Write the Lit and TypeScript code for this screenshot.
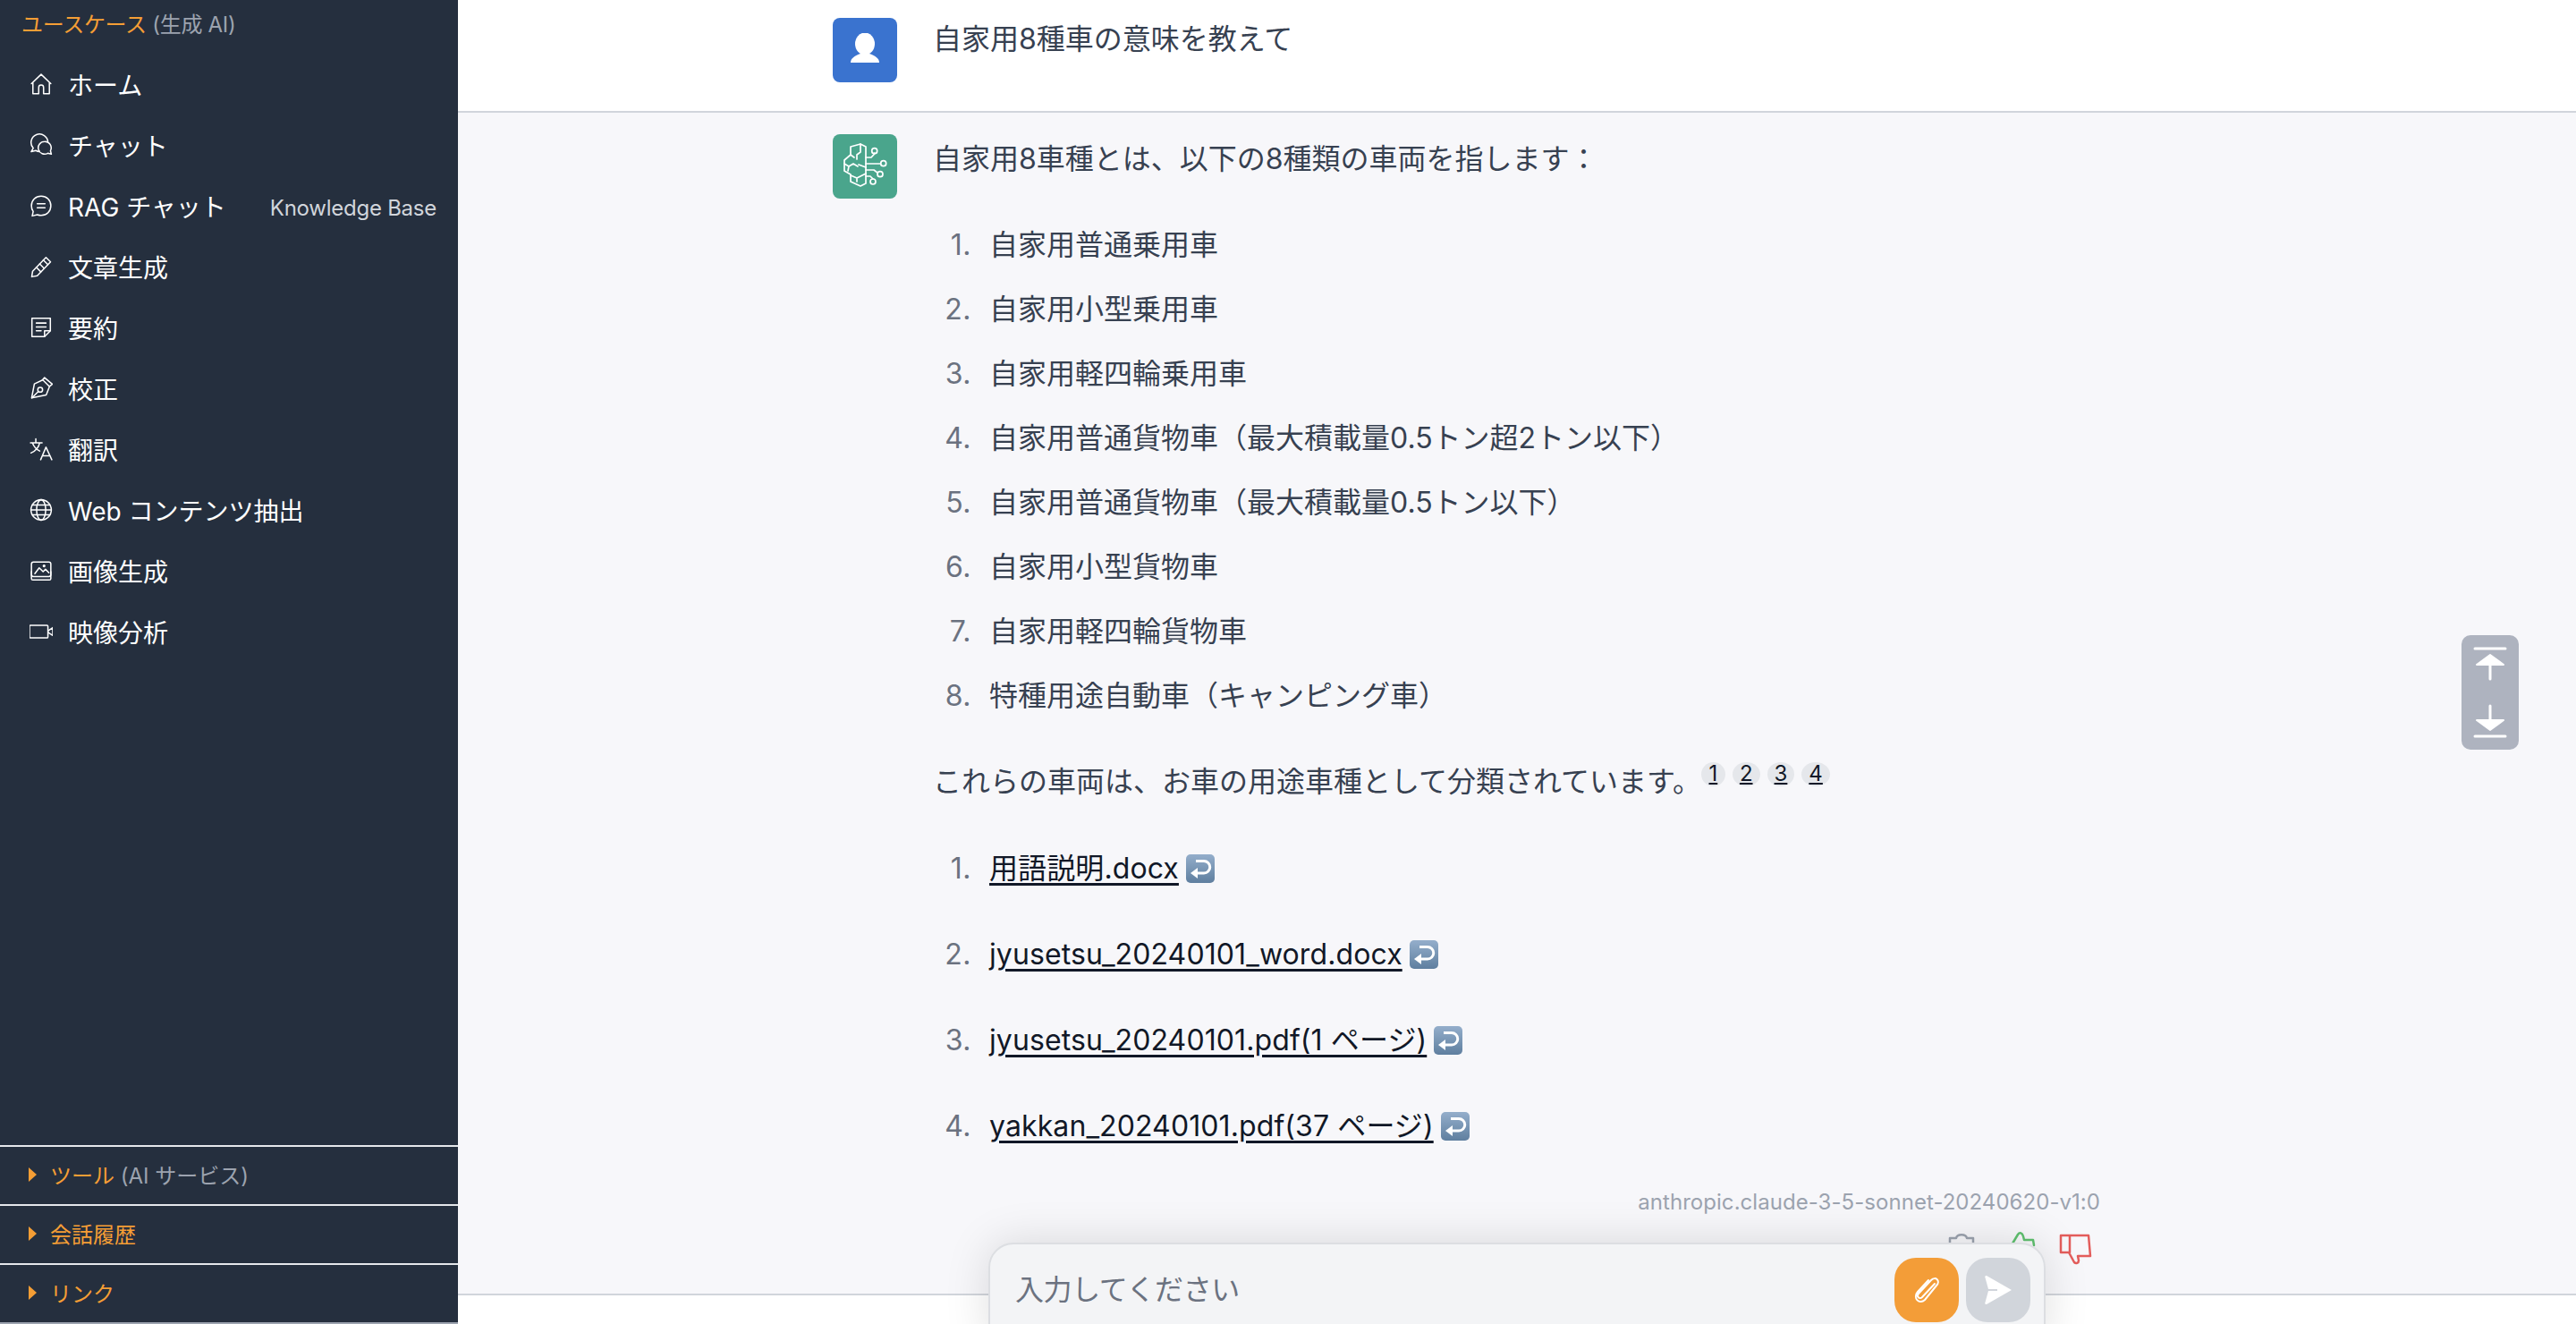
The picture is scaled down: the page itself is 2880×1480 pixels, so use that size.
import { LitElement, html, css, svg } from "lit";
import { customElement } from "lit/decorators.js";

const ic = (body: unknown) => html`<svg class="ic" viewBox="0 0 24 24" fill="none" stroke="currentColor" stroke-width="1.4" stroke-linecap="round" stroke-linejoin="round">${body}</svg>`;

const menu: [string, unknown, string?][] = [
  ["ホーム", svg`<path d="M2 11.500 12 2l10 9.500M3.500 10.500V22h6v-6.500a2.500 2.500 0 0 1 5 0V22h6V10.500"/>`],
  ["チャット", svg`<path d="M19 9.500A8.700 8.700 0 1 0 3.800 15.300L1.800 19l4.700-1.200c1.300.7 2.500 1 3.700 1"/><path d="M15.500 8.500a6.500 6.500 0 1 0 3.300 12.100l3.700.9-.9-3.500A6.500 6.500 0 0 0 15.500 8.500Z"/>`],
  ["RAG チャット", svg`<path d="M12 2c5.700 0 10 4.300 10 10s-4.300 10-10 10c-1.400 0-2.700-.3-3.900-.8L2.800 22.500l1-4.600A9.800 9.800 0 0 1 2 12C2 6.300 6.300 2 12 2Z"/><path d="M8 10h8M8 14h8"/>`, "Knowledge Base"],
  ["文章生成", svg`<path d="m17 2.500 4.700 4.600L8 21.500l-5.700 1 .9-5.700L17 2.500Z"/><path d="m14.300 5.300 4.700 4.700M10.500 9.200l4.600 4.600M7 12.700l4.700 4.700"/>`],
  ["要約", svg`<path d="M2.500 2.500h19v13l-6 6h-13v-19Z"/><path d="M7 7.500h10M7 11.500h10M7 15.500h5M15.500 21.500v-6h6"/>`],
  ["校正", svg`<path d="m15.500 1 8 6.700-3 2.500-7-7 2-2.200Z"/><path d="M13.500 3.500 5 7.500 2.200 22l15-3 3.300-8.300"/><circle cx="11" cy="13.500" r="2.500"/><path d="m2.500 22 6.700-6.700"/>`],
  ["翻訳", svg`<path d="M1 5.500h12M6.500 1.500v4M10.500 5.500c-1 5-4 8.500-9 10.500M3 5.500c1.500 4 4 6.800 7.500 8.500M11.500 23l5.500-13 6 13M13.300 19h8"/>`],
  ["Web コンテンツ抽出", svg`<circle cx="12" cy="12" r="10.500"/><path d="M1.500 12h21M3 7h18M3 17h18"/><ellipse cx="12" cy="12" rx="4.700" ry="10.500"/>`],
  ["画像生成", svg`<rect x="2" y="3" width="20" height="15" rx="2"/><path d="M2 13v7a1.500 1.500 0 0 0 1.500 1.500h17A1.500 1.500 0 0 0 22 20v-7M5.500 15l4.500-6 4 4 2.500-2.500L20 14"/><circle cx="15" cy="7" r=".8" fill="currentColor"/>`],
  ["映像分析", svg`<rect x="0" y="5.500" width="19" height="13" rx="1"/><path d="m19.500 11 4.500-3v8l-4.500-3"/>`],
];

const steps = ["自家用普通乗用車", "自家用小型乗用車", "自家用軽四輪乗用車", "自家用普通貨物車（最大積載量0.5トン超2トン以下）", "自家用普通貨物車（最大積載量0.5トン以下）", "自家用小型貨物車", "自家用軽四輪貨物車", "特種用途自動車（キャンピング車）"];
const links = ["用語説明.docx", "jyusetsu_20240101_word.docx", "jyusetsu_20240101.pdf(1 ページ)", "yakkan_20240101.pdf(37 ページ)"];

const returnEmoji = html`<svg class="emoji" viewBox="0 0 32 32"><defs><linearGradient id="eg" x1="0" y1="0" x2="0" y2="1"><stop offset="0" stop-color="#94aecb"/><stop offset="1" stop-color="#5f7f9f"/></linearGradient></defs><rect x="0" y="0" width="32" height="32" rx="5" fill="url(#eg)"/><path d="M11 7.500h9a6.500 6.500 0 0 1 0 13.500h-7" fill="none" stroke="#fff" stroke-width="3"/><path d="m13 15-8 6 8 6Z" fill="#fff"/></svg>`;

const brain = html`<svg class="brain" viewBox="0 0 72 72" fill="none" stroke="#fff" stroke-width="1.700" stroke-linecap="round" stroke-linejoin="round">
  <path d="M31 11 20 14v9l-7 6v12l7 4v8l11 5 6-3V14l-6-3Z"/>
  <path d="M31 11v9l-4 3v5M20 23l4 3M13 33l5 3 5-3 5 3M18 36l-1 5M37 37l-8-3M37 44l-10 5v4M27 49l-7-3"/>
  <path d="M37 33h16.500M37 26h6l3.700-4v-1M37 40h9l4 3M37 47h5l3 3"/>
  <circle cx="46.700" cy="18.700" r="3"/><circle cx="56.700" cy="32.700" r="3"/><circle cx="53" cy="44.700" r="3"/><circle cx="45" cy="53" r="3"/>
</svg>`;

@customElement("app-root")
export class AppRoot extends LitElement {
  static styles = css`
    :host { display: block; width: 2880px; height: 1480px; overflow: hidden; position: relative; font-family: Inter, "Noto Sans CJK JP", "Noto Sans", sans-serif; color: #374151; }
    .app { display: flex; height: 1480px; }
    .side { width: 512px; flex: none; background: #252f3e; color: #fff; display: flex; flex-direction: column; border-bottom: 2px solid #9ca3af; box-sizing: border-box; }
    .title { font-size: 24px; line-height: 32px; padding: 12px 0 0 24px; color: #f59e35; height: 60px; box-sizing: border-box; letter-spacing: -.3px; }
    .muted { color: #9ca3af; }
    .menu { display: flex; flex-direction: column; }
    .item { display: flex; align-items: center; height: 68px; padding: 0 24px 0 33px; font-size: 28px; }
    .ic { width: 26px; height: 26px; margin-right: 17px; flex: none; }
    .kb { margin-left: auto; font-size: 24px; color: #d1d5db; letter-spacing: -.25px; padding-top: 4px; }
    .fold { margin-top: auto; }
    .sec { height: 66px; border-top: 2px solid #e5e7eb; box-sizing: border-box; display: flex; align-items: center; padding: 0 0 3px 32px; font-size: 24px; color: #f59e35; }
    .sec i { width: 0; height: 0; border-left: 9px solid #f59e35; border-top: 8px solid transparent; border-bottom: 8px solid transparent; margin-right: 15px; }
    .main { flex: 1; min-width: 0; display: flex; flex-direction: column; }
    .turn { display: flex; padding-left: 419px; }
    .inner { width: 1417px; display: flex; gap: 40px; }
    .user { height: 126px; background: #fff; border-bottom: 2px solid #d1d5db; box-sizing: border-box; padding-top: 20px; }
    .bot { height: 1322px; background: #f7f7fa; border-bottom: 2px solid #d1d5db; box-sizing: border-box; padding-top: 24px; }
    .foot { flex: 1; background: #fff; }
    .av { width: 72px; height: 72px; border-radius: 8px; flex: none; display: flex; align-items: center; justify-content: center; }
    .av.u { background: #3a73cf; }
    .av.b { background: #4aa58c; }
    .brain { width: 72px; height: 72px; }
    .body { font-size: 32px; line-height: 56px; flex: 1; min-width: 0; color: #374151; position: relative; }
    .user .body { margin-top: -4px; }
    p { margin: 0; }
    .lede { margin-bottom: 40px; }
    ol { margin: 0; padding: 0 0 0 63px; list-style: none; }
    li { position: relative; margin-bottom: 16px; }
    li b { position: absolute; left: -60px; width: 40px; text-align: right; font-weight: 400; color: #6b7280; letter-spacing: .5px; }
    .after { margin: 40px 0 41px; display: flex; align-items: flex-start; }
    .refs { display: inline-flex; gap: 8px; margin-left: 0; margin-top: 6px; }
    .ref { min-width: 27px; height: 27px; padding: 0 8px; box-sizing: border-box; border-radius: 50%; background: #e5e7eb; color: #111827; font-size: 24px; line-height: 26px; text-align: center; text-decoration: underline; text-decoration-thickness: 2px; text-underline-offset: 2px; }
    .links li { margin-bottom: 40px; }
    .links a { color: #111827; text-decoration: underline; text-decoration-thickness: 3px; text-underline-offset: 5px; letter-spacing: .1px; }
    .emoji { width: 32px; height: 32px; margin-left: 8px; vertical-align: -5px; }
    .model { position: absolute; top: 1178px; right: 0; left: 0; font-size: 24px; line-height: 32px; color: #9ca3af; text-align: right; letter-spacing: .05px; }
    .jump { position: absolute; left: 2752px; top: 710px; width: 64px; height: 128px; border-radius: 10px; background: #aeb3bf; display: flex; flex-direction: column; justify-content: space-between; align-items: center; padding: 13px 0; box-sizing: border-box; }
    .jump svg { width: 40px; height: 40px; }
    .shade { position: absolute; left: 1105px; top: 1389px; width: 1182px; height: 120px; border-radius: 28px; background: #f3f4f6; border: 2px solid #dcdee2; box-sizing: border-box; box-shadow: 0 0 50px rgba(0,0,0,.13); display: flex; padding: 15px 15px 0 28px; gap: 8px; }
    .ph { flex: 1; font-size: 32px; line-height: 52px; padding-top: 10px; color: #6b7280; letter-spacing: -.4px; }
    .btn { width: 72px; height: 72px; border-radius: 24px; display: flex; align-items: center; justify-content: center; flex: none; }
    .btn.a { background: #f39d38; }
    .btn.s { background: #d1d5db; }
    .acts { position: absolute; left: 2170px; top: 1376px; }
  `;

  render() {
    return html`<div class="app">
      <aside class="side">
        <div class="title">ユースケース <span class="muted">(生成 AI)</span></div>
        <nav class="menu">
          ${menu.map(([t, i, k]) => html`<div class="item">${ic(i)}<span>${t}</span>${k ? html`<span class="kb">${k}</span>` : ""}</div>`)}
        </nav>
        <div class="fold">
          <div class="sec"><i></i><span>ツール <span class="muted">(AI サービス)</span></span></div>
          <div class="sec"><i></i><span>会話履歴</span></div>
          <div class="sec"><i></i><span>リンク</span></div>
        </div>
      </aside>
      <main class="main">
        <section class="turn user"><div class="inner">
          <div class="av u"><svg width="36" height="38" viewBox="0 0 36 38" fill="#fff"><ellipse cx="18" cy="12" rx="11" ry="12.500"/><path d="M2 33c0-5 5-8 11-10h10c6 2 11 5 11 10Z"/></svg></div>
          <div class="body">自家用8種車の意味を教えて</div>
        </div></section>
        <section class="turn bot"><div class="inner">
          <div class="av b">${brain}</div>
          <div class="body">
            <p class="lede">自家用8車種とは、以下の8種類の車両を指します：</p>
            <ol>${steps.map((s, i) => html`<li><b>${i + 1}.</b>${s}</li>`)}</ol>
            <div class="after"><span>これらの車両は、お車の用途車種として分類されています。</span><span class="refs">${[1, 2, 3, 4].map((n) => html`<span class="ref">${n}</span>`)}</span></div>
            <ol class="links">${links.map((s, i) => html`<li><b>${i + 1}.</b><a>${s}${returnEmoji}</a></li>`)}</ol>
            <div class="model">anthropic.claude-3-5-sonnet-20240620-v1:0</div>
          </div>
        </div></section>
        <div class="foot"></div>
      </main>
    </div>
    <svg class="acts" width="180" height="44" viewBox="0 0 180 44" fill="none" stroke-width="2.500" stroke-linejoin="round" stroke-linecap="round">
      <path stroke="#9ca3af" d="M10 8h7c1-5 11-5 12 0h7v30H10V8Z"/>
      <path stroke="#5fc06f" d="M80 14l6-10c2-3 5-2 6 2l1 4h10l1 6"/>
      <path stroke="#e35d5b" d="M144 5h21l2 23h-14l1 5c0 3-3 4-5 2l-6-11h-9V5h10v19"/>
    </svg>
    <div class="jump">
      <svg viewBox="0 0 40 40" fill="#fff" stroke="#fff" stroke-width="3" stroke-linecap="round" stroke-linejoin="round"><path d="M3 2h34" fill="none"/><path d="M20 9 5 20h30Z" stroke-width="2"/><path d="M20 20v16" fill="none"/></svg>
      <svg viewBox="0 0 40 40" fill="#fff" stroke="#fff" stroke-width="3" stroke-linecap="round" stroke-linejoin="round"><path d="M20 4v16" fill="none"/><path d="M5 20h30L20 31Z" stroke-width="2"/><path d="M3 38h34" fill="none"/></svg>
    </div>
    <div class="shade">
      <div class="ph">入力してください</div>
      <div class="btn a"><svg width="36" height="36" viewBox="0 0 36 36" fill="none" stroke="#fff" stroke-width="2" stroke-linecap="round"><path d="M27 11 13 26c-3 3-7-1-4-4L23 7c5-5 11 1 6 6L16 29c-6 6-14-2-8-9l12-13"/></svg></div>
      <div class="btn s"><svg width="40" height="40" viewBox="0 0 40 40"><path fill="#fff" d="M7 4 35 20 7 36c-1 .4-2-.5-1.700-1.500L9 21h10v-2H9L5.300 5.500C5 4.500 6 3.600 7 4Z"/></svg></div>
    </div>`;
  }
}
